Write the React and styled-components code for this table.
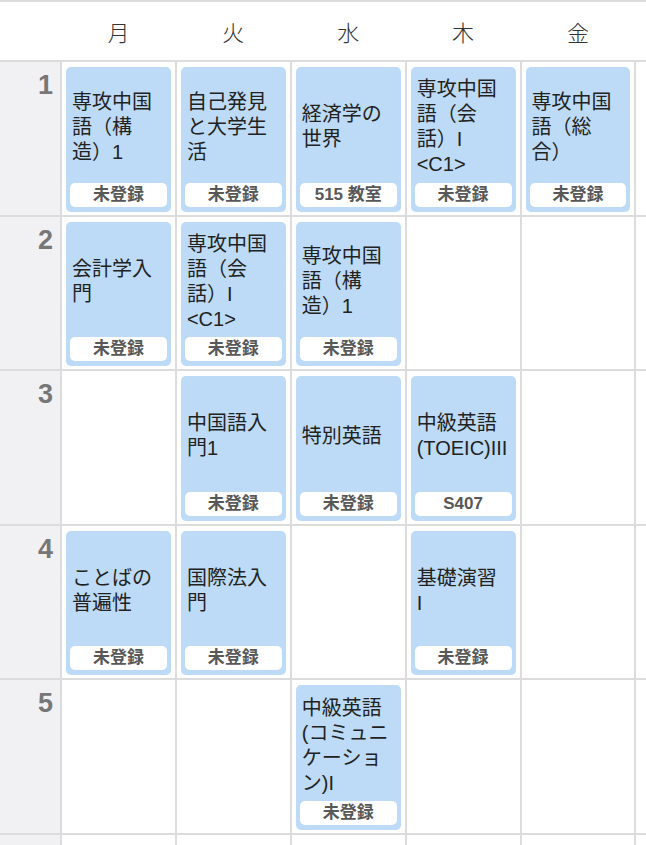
import React from 'react';
import styled, {createGlobalStyle} from "styled-components";

const GlobalStyle = createGlobalStyle`
  html, body {
    margin: 0;
    padding: 0;
    overflow: hidden;
    background: #fff;
  }
  body {
    font-family: "Liberation Sans", "Noto Sans CJK JP", sans-serif;
  }
`;

const COL = '112.9px';
const ROW = '152.6px';

const Timetable = styled.div`
  width: 760px;
  border-top: 2px solid #dcdcdc;
`;
const HeaderRow = styled.div`
  display: grid;
  grid-template-columns: 60px repeat(6, ${COL});
  column-gap: 2px;
  height: 58px;
  background: #fff;
  border-bottom: 2px solid #dcdcdc;
`;
const DayTitle = styled.div`
  display: flex;
  align-items: center;
  justify-content: center;
  font-size: 22px;
  color: #333;
  font-family: "Noto Sans CJK JP", sans-serif;
  font-weight: 300;
`;
const Body = styled.div`
  display: grid;
  grid-template-columns: 60px repeat(6, ${COL});
  grid-auto-rows: ${ROW};
  gap: 2px;
  background: #dcdcdc;
`;
const PeriodCell = styled.div`
  background: #f1f1f3;
  text-align: right;
  padding: 10px 7px 0 0;
  font-size: 27px;
  line-height: 27px;
  font-weight: bold;
  color: #777;
`;
const Cell = styled.div`
  background: #fff;
  padding: 5px 4px 3px;
  box-sizing: border-box;
  min-width: 0;
`;
const Card = styled.div`
  height: 100%;
  box-sizing: border-box;
  background: #bddbf7;
  border-radius: 5px;
  padding: 3px 4px 5px;
  display: flex;
  flex-direction: column;
`;
const CardTitle = styled.div`
  flex: 1;
  display: flex;
  align-items: center;
  padding: 5px 6px 0 2px;
  min-height: 0;
`;
const CardText = styled.p`
  margin: 0;
  font-size: 20px;
  line-height: 25px;
  color: #222;
  width: 100%;
`;
const CardLabel = styled.div`
  height: 24px;
  line-height: 24px;
  margin-top: 3px;
  background: #fff;
  border-radius: 5px;
  text-align: center;
  font-size: 17px;
  font-weight: bold;
  color: #585858;
`;

const days = ['月', '火', '水', '木', '金', ''];

const timetable = [
    [
        {title: '専攻中国語（構造）1', room: '未登録'},
        {title: '自己発見と大学生活', room: '未登録'},
        {title: '経済学の世界', room: '515 教室'},
        {title: '専攻中国語（会話）I <C1>', room: '未登録'},
        {title: '専攻中国語（総合）', room: '未登録'},
        null,
    ],
    [
        {title: '会計学入門', room: '未登録'},
        {title: '専攻中国語（会話）I <C1>', room: '未登録'},
        {title: '専攻中国語（構造）1', room: '未登録'},
        null, null, null,
    ],
    [
        null,
        {title: '中国語入門1', room: '未登録'},
        {title: '特別英語', room: '未登録'},
        {title: '中級英語(TOEIC)III', room: 'S407'},
        null, null,
    ],
    [
        {title: 'ことばの普遍性', room: '未登録'},
        {title: '国際法入門', room: '未登録'},
        null,
        {title: '基礎演習 I', room: '未登録'},
        null, null,
    ],
    [
        null, null,
        {title: '中級英語(コミュニケーション)I', room: '未登録'},
        null, null, null,
    ],
    [null, null, null, null, null, null],
];

const LectureCard = ({it}) => (
    <Card>
        <CardTitle>
            <CardText>{it.title}</CardText>
        </CardTitle>
        <CardLabel>{it.room}</CardLabel>
    </Card>
);

const App = () => {
    return (
        <>
            <GlobalStyle/>
            <Timetable>
                <HeaderRow>
                    <div/>
                    {days.map((d, i) => <DayTitle key={i}>{d}</DayTitle>)}
                </HeaderRow>
                <Body>
                    {timetable.map((row, i) => (
                        <React.Fragment key={i}>
                            <PeriodCell>{i < 5 ? i + 1 : ''}</PeriodCell>
                            {row.map((it, j) => (
                                <Cell key={j}>{it && <LectureCard it={it}/>}</Cell>
                            ))}
                        </React.Fragment>
                    ))}
                </Body>
            </Timetable>
        </>
    );
};

export default App;
